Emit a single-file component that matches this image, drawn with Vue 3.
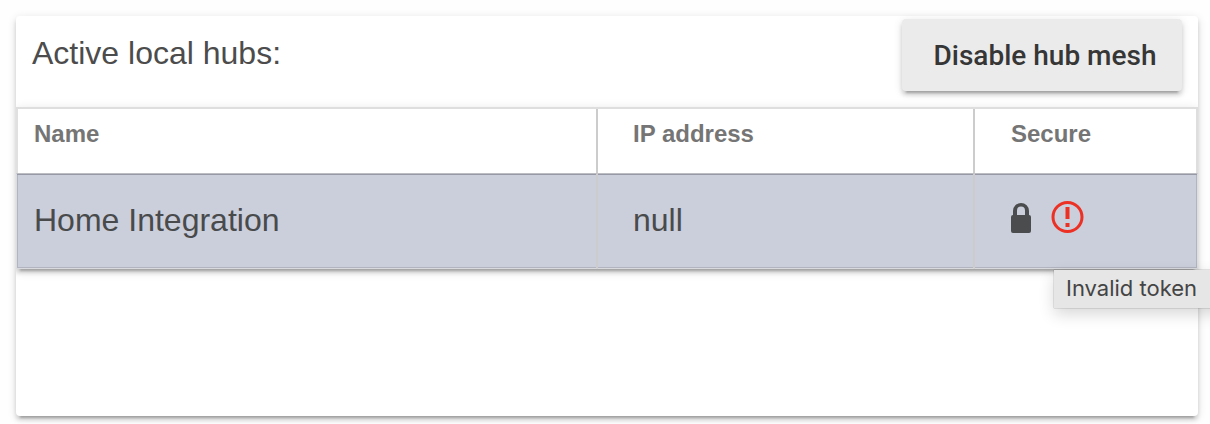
<template>
  <div class="page">
    <div class="card">
      <div class="card-header">
        <span class="title">Active local hubs:</span>
        <button type="button" class="btn">Disable hub mesh</button>
      </div>

      <table class="hub-table">
        <thead>
          <tr>
            <th class="col-name">Name</th>
            <th class="col-ip">IP address</th>
            <th>Secure</th>
          </tr>
        </thead>
        <tbody>
          <tr v-for="hub in hubs" :key="hub.name">
            <td>{{ hub.name }}</td>
            <td>{{ hub.ip }}</td>
            <td>
              <div class="icons">
                <svg class="lock" viewBox="0 0 20 30">
                  <path
                    fill-rule="evenodd"
                    d="M2 12V8a8 8 0 0 1 16 0v4a2 2 0 0 1 2 2v14a2 2 0 0 1-2 2H2a2 2 0 0 1-2-2V14a2 2 0 0 1 2-2zM6 12h8V7.500a4 4 0 0 0-8 0z"
                  />
                </svg>
                <svg class="alert" viewBox="0 0 32 32" @mouseenter="showTip = true">
                  <circle cx="16" cy="16" r="14.500" />
                  <path d="M14 6h4v12h-4zM14 22h4v4h-4z" />
                </svg>
              </div>
            </td>
          </tr>
        </tbody>
      </table>

      <div v-if="showTip" class="tooltip">{{ hubs[0].error }}</div>
    </div>
  </div>
</template>

<script setup>
import { ref } from 'vue'

const hubs = ref([
  { name: 'Home Integration', ip: 'null', error: 'Invalid token' }
])
const showTip = ref(true)
</script>

<style scoped>
.page {
  box-sizing: border-box;
  height: 424px;
  padding: 16px 0 0 16px;
  background: #fefefe;
  overflow: hidden;
}

.card {
  position: relative;
  width: 1182px;
  height: 400px;
  background: #fff;
  border-radius: 4px;
  box-shadow: 0 4px 4px 0 rgba(0, 0, 0, 0.14),
    0 6px 2px -4px rgba(0, 0, 0, 0.2), 0 2px 10px 0 rgba(0, 0, 0, 0.12);
  font-family: "Liberation Sans", Arial, sans-serif;
  color: #4c4c4c;
}

.card-header {
  display: flex;
  justify-content: space-between;
  align-items: flex-start;
  box-sizing: border-box;
  height: 91px;
  padding: 3px 16px 0;
}

.title {
  font-size: 32px;
  line-height: 36px;
  margin-top: 16px;
}

.btn {
  width: 280px;
  height: 72px;
  padding: 0 0 0 6px;
  border: none;
  border-radius: 4px;
  background: #ebebeb;
  color: #363636;
  font-family: Roboto, sans-serif;
  font-size: 28px;
  font-weight: 500;
  box-shadow: 0 4px 4px 0 rgba(0, 0, 0, 0.14),
    0 6px 2px -4px rgba(0, 0, 0, 0.2), 0 2px 10px 0 rgba(0, 0, 0, 0.12);
  cursor: pointer;
}

.hub-table {
  box-sizing: border-box;
  width: 1182px;
  height: 162px;
  table-layout: fixed;
  border-collapse: separate;
  border-spacing: 0;
  border-top: 2px solid #dedede;
  box-shadow: 0 4px 4px 0 rgba(0, 0, 0, 0.14),
    0 6px 2px -4px rgba(0, 0, 0, 0.2), 0 2px 10px 0 rgba(0, 0, 0, 0.12);
  clip-path: inset(-12px 0 -12px 0);
}

.col-name {
  width: 582px;
}

.col-ip {
  width: 377px;
}

th,
td {
  box-sizing: border-box;
  padding: 0 0 0 35px;
  text-align: left;
  border-right: 2px solid #ccc;
}

th:last-child,
td:last-child {
  padding-left: 36px;
}

th {
  height: 64px;
  padding-bottom: 14px;
  background: #fff;
  color: #757575;
  font-size: 24px;
  line-height: 28px;
}

th:first-child {
  padding-left: 16px;
  border-left: 2px solid #e0e0e0;
}

th:last-child {
  border-right-color: #dedede;
}

td {
  height: 96px;
  padding-bottom: 2px;
  background: #cbcedb;
  color: #484a4b;
  font-size: 32px;
  line-height: 36px;
  border-top: 1px solid #bcbcc3;
  border-bottom: 1px solid #d9dadd;
  box-shadow: inset 0 1px #9799a6, inset 0 -1px #b2b4bf;
}

td:first-child {
  padding-left: 17px;
  border-left: 1px solid #dcdde2;
  box-shadow: inset 0 1px #9799a6, inset 1px -1px #b2b4bf;
}

td:last-child {
  border-right: 1px solid #dcdde2;
  box-shadow: inset 0 1px #9799a6, inset -1px -1px #b2b4bf;
}

.icons {
  display: flex;
  align-items: flex-start;
  gap: 20px;
  height: 38px;
}

.icons svg {
  display: block;
}

.lock {
  width: 20px;
  height: 30px;
  margin-top: 2px;
  fill: #4a4c4d;
}

.alert {
  width: 33px;
  height: 32px;
}

.alert circle {
  fill: none;
  stroke: #ed3024;
  stroke-width: 3;
}

.alert path {
  fill: #ed3024;
}

.tooltip {
  position: absolute;
  left: 1038px;
  top: 254px;
  box-sizing: border-box;
  width: 180px;
  height: 38px;
  padding-left: 12px;
  background: #e6e6e6;
  color: #444;
  font-family: Inter, sans-serif;
  font-size: 22px;
  line-height: 37px;
  white-space: nowrap;
  box-shadow: 0 0 1px rgba(0, 0, 0, 0.5), 0 6px 16px rgba(0, 0, 0, 0.16);
}
</style>
